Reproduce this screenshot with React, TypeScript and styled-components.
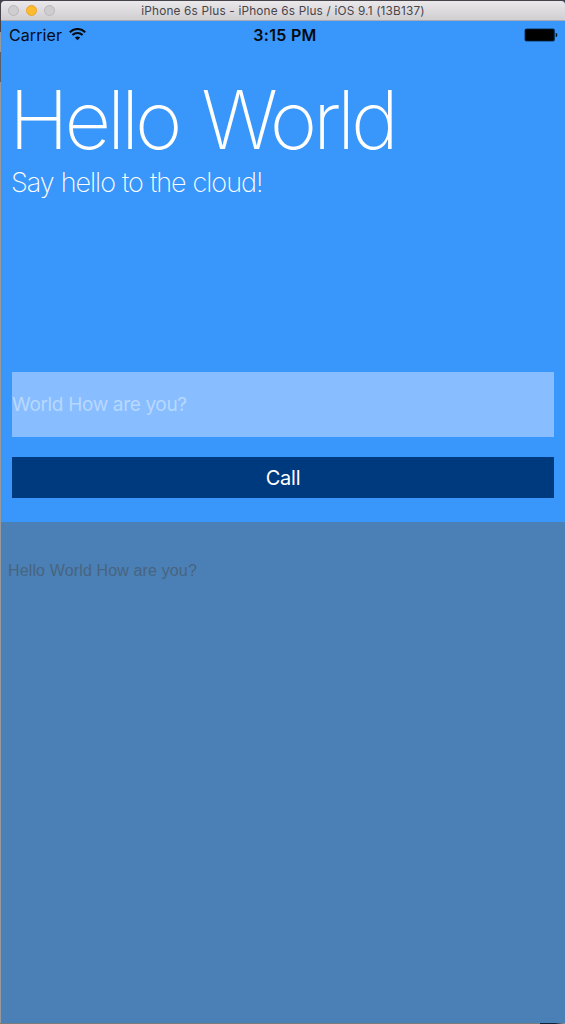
import React from 'react';
import styled, { createGlobalStyle } from 'styled-components';

const GlobalStyle = createGlobalStyle`
  * { box-sizing: border-box; }
  body { margin: 0; background: #45424a; font-family: Inter, 'Liberation Sans', sans-serif; }
`;

const Desktop = styled.div`
  height: 1024px;
  padding: 1px 0 1px 1px;
  background: linear-gradient(to right, #97999c 1px, transparent 1px) 0 82px / 100% 941px no-repeat,
    linear-gradient(to right, #5b5f69 1px, transparent 1px) 0 52px / 100% 30px no-repeat,
    linear-gradient(to right, #97999c 1px, transparent 1px) 0 32px / 100% 20px no-repeat,
    linear-gradient(to right, #797b7d 0 540px, #102336 540px 555px, #9a9c9e 565px) 0 1023px / 100% 1px no-repeat,
    #45424a;
`;

const Window = styled.div`
  display: flex;
  flex-direction: column;
  height: 100%;
  overflow: hidden;
  border-radius: 4px 4px 0 0;
  background: #3996fa;
`;

const TitleBar = styled.header`
  display: grid;
  grid-template-columns: 60px 1fr 60px;
  align-items: center;
  flex: 0 0 20px;
  padding: 1px 0 0;
  background: linear-gradient(#ebe8eb, #d1ced1);
  border-bottom: 1px solid #a8abb3;
`;

const Lights = styled.div`
  display: flex;
  gap: 7px;
  padding: 0 0 1px 7px;
`;

const Light = styled.span<{ $active?: boolean }>`
  width: 11px;
  height: 11px;
  border-radius: 50%;
  background: ${(p) => (p.$active ? '#fdbb2d' : '#cfcdcf')};
  border: 1px solid ${(p) => (p.$active ? '#e6a530' : '#b9b7b9')};
`;

const WindowTitle = styled.div`
  text-align: center;
  font-size: 11.8px;
  line-height: 18px;
  letter-spacing: 0.18px;
  color: #47454a;
  white-space: nowrap;
`;

const StatusBar = styled.div`
  display: grid;
  grid-template-columns: 1fr auto 1fr;
  align-items: center;
  flex: 0 0 28px;
  padding: 0 7px 0 8px;
  color: #050a12;
  font-size: 16px;
`;

const Carrier = styled.div`
  display: flex;
  align-items: center;
  gap: 7px;
  letter-spacing: 0.1px;
`;

const WifiIcon = styled.svg`
  margin-bottom: 2px;
`;

const Time = styled.div`
  padding-left: 3px;
  font-weight: 600;
  letter-spacing: 0.3px;
`;

const BatteryIcon = styled.svg`
  justify-self: end;
`;

const Hero = styled.section`
  flex: 0 0 323px;
  padding: 29px 11px 0 8px;
  color: #fff;
`;

const Heading = styled.h1`
  margin: 0;
  font-size: 81px;
  line-height: 84px;
  font-weight: 200;
  letter-spacing: -4.2px;
  word-spacing: 4.5px;
  white-space: nowrap;
`;

const Subtitle = styled.p`
  margin: 3px 0 0 2px;
  font-size: 27px;
  line-height: 36px;
  font-weight: 200;
  letter-spacing: -1px;
  word-spacing: 0.4px;
  white-space: nowrap;
`;

const Form = styled.form`
  display: flex;
  flex-direction: column;
  gap: 20px;
  flex: 0 0 150px;
  padding: 0 11px;
`;

const Field = styled.input`
  height: 65px;
  padding: 0;
  border: 0;
  border-radius: 0;
  outline: 0;
  background: #88beff;
  color: #b8d8ff;
  font-family: inherit;
  font-size: 19px;
  letter-spacing: -0.34px;
`;

const CallButton = styled.button`
  height: 41px;
  padding: 0;
  border: 0;
  background: #003a7e;
  color: #fff;
  font-family: inherit;
  font-size: 20px;
  letter-spacing: -0.2px;
`;

const Output = styled.section`
  flex: 1;
  padding: 39px 7px 0;
  background: #4a80b5;
  color: #486480;
  font-family: 'Liberation Sans', Arial, sans-serif;
  font-size: 16px;
  line-height: 20px;
  letter-spacing: 0.14px;
  white-space: nowrap;
`;

const App = () => (
  <>
    <GlobalStyle />
    <Desktop>
      <Window>
        <TitleBar>
          <Lights>
            <Light />
            <Light $active />
            <Light />
          </Lights>
          <WindowTitle>iPhone 6s Plus - iPhone 6s Plus / iOS 9.1 (13B137)</WindowTitle>
        </TitleBar>
        <StatusBar>
          <Carrier>
            <span>Carrier</span>
            <WifiIcon width="17" height="13" viewBox="0 0 17 13" fill="none" stroke="#050a12" strokeWidth="2.1">
              <path d="M0.8 4.3C5 -0.1 12 -0.1 16.2 4.3" />
              <path d="M3.4 7.1C6.3 4.2 10.7 4.2 13.6 7.1" />
              <path d="M5.8 9.5C7.3 8 9.7 8 11.2 9.5L8.5 12.2Z" fill="#050a12" stroke="none" />
            </WifiIcon>
          </Carrier>
          <Time>3:15 PM</Time>
          <BatteryIcon width="34" height="14" viewBox="0 0 34 14">
            <rect x="0.5" y="0.5" width="30.5" height="13" rx="2" fill="#0c3a68" />
            <rect x="1.3" y="1.3" width="28.5" height="11.4" rx="1" fill="#000" />
            <path d="M31.7 4.8Q33.4 5.2 33.4 7T31.7 9.2Z" fill="#061c34" />
          </BatteryIcon>
        </StatusBar>
        <Hero>
          <Heading>Hello World</Heading>
          <Subtitle>Say hello to the cloud!</Subtitle>
        </Hero>
        <Form onSubmit={(e) => e.preventDefault()}>
          <Field aria-label="Name" defaultValue="World How are you?" />
          <CallButton type="submit">Call</CallButton>
        </Form>
        <Output>Hello World How are you?</Output>
      </Window>
    </Desktop>
  </>
);

export default App;
